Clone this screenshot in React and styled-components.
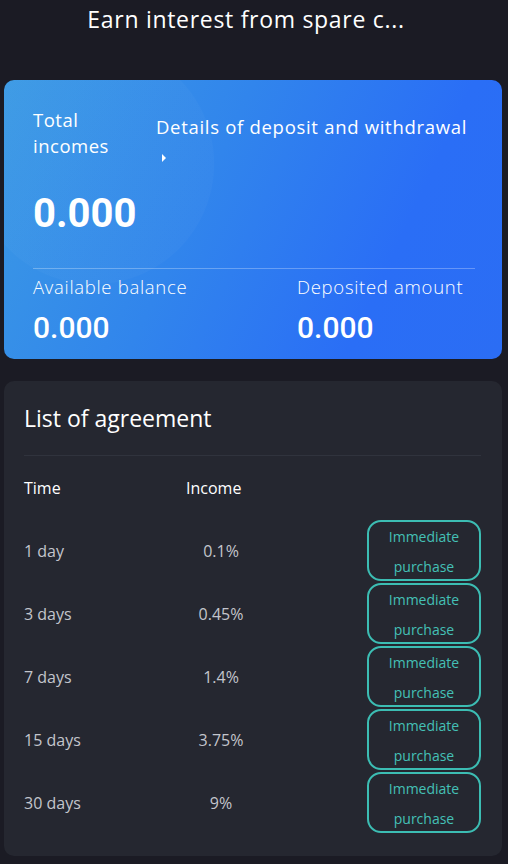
import React from "react";
import styled, { createGlobalStyle } from "styled-components";

const GlobalStyle = createGlobalStyle`
  html, body {
    margin: 0;
    padding: 0;
    background: #1b1b24;
  }
  body {
    font-family: "Open Sans", "Noto Sans", sans-serif;
    color: #fff;
  }
`;

const Page = styled.div`
  width: 508px;
  min-height: 864px;
  background: #1b1b24;
  padding: 0 6px 9px 4px;
  box-sizing: border-box;
  display: flex;
  flex-direction: column;
`;

const Header = styled.div`
  height: 38px;
  display: flex;
  align-items: center;
  justify-content: center;
  padding: 0 14px 0 0;
  font-size: 23px;
  letter-spacing: 0.7px;
  color: #fff;
`;

const BlueCard = styled.div`
  margin-top: 42px;
  height: 279px;
  border-radius: 10px;
  background: radial-gradient(circle at 18% 30%, rgba(255, 255, 255, 0.025) 0, rgba(255, 255, 255, 0.025) 120px, transparent 121px),
    linear-gradient(115deg, #3b9ae4 0%, #3185ec 40%, #2a6ef6 75%, #2b6df4 100%);
  padding: 27px 27px 0 29px;
  box-sizing: border-box;
  display: flex;
  flex-direction: column;
`;

const TopRow = styled.div`
  display: flex;
  gap: 33px;
`;

const TotalLabel = styled.div`
  width: 90px;
  font-size: 18.5px;
  letter-spacing: 0.5px;
  line-height: 26px;
`;

const DetailsLink = styled.div`
  padding-top: 7px;
  font-size: 18.5px;
  letter-spacing: 0.7px;
  line-height: 26px;
  white-space: nowrap;
`;

const Caret = styled.span`
  display: block;
  margin: 14px 0 0 6px;
  width: 0;
  height: 0;
  border-top: 4px solid transparent;
  border-bottom: 4px solid transparent;
  border-left: 4px solid #fff;
`;

const BigValue = styled.div`
  margin-top: 30px;
  font-family: Roboto, sans-serif;
  font-size: 40px;
  font-weight: 700;
  line-height: 44px;
`;

const Divider = styled.div`
  margin-top: 32px;
  height: 1px;
  background: rgba(255, 255, 255, 0.28);
`;

const Stats = styled.div`
  display: grid;
  grid-template-columns: 264px 1fr;
  margin-top: 5px;
`;

const Stat = styled.div`
  display: flex;
  flex-direction: column;
`;

const StatLabel = styled.div`
  font-size: 18.5px;
  letter-spacing: 0.7px;
  line-height: 26px;
  font-weight: 300;
`;

const StatValue = styled.div`
  margin-top: 12px;
  font-family: Roboto, sans-serif;
  font-size: 30px;
  font-weight: 500;
  line-height: 32px;
`;

const ListCard = styled.div`
  margin-top: 22px;
  flex: 1;
  border-radius: 10px;
  background: #252730;
  padding: 22px 21px 22px 20px;
  box-sizing: border-box;
`;

const ListTitle = styled.div`
  font-size: 23px;
  line-height: 30px;
  color: #fff;
`;

const ListDivider = styled.div`
  margin-top: 22px;
  height: 1px;
  background: #30333d;
`;

const TableHead = styled.div`
  display: grid;
  grid-template-columns: 162px 70px 1fr;
  margin-top: 21px;
  font-size: 16px;
  line-height: 22px;
  color: #fff;
  margin-bottom: 20px;
`;

const Row = styled.div`
  display: grid;
  grid-template-columns: 162px 70px 1fr;
  align-items: center;
  height: 63px;
  font-size: 16px;
  color: #c3c5cc;
`;

const IncomeCell = styled.div`
  text-align: center;
`;

const BuyButton = styled.button`
  justify-self: end;
  width: 114px;
  height: 61px;
  border: 2px solid #3cbdb3;
  border-radius: 14px;
  background: transparent;
  color: #44c0b6;
  font-family: "Open Sans", sans-serif;
  font-size: 14px;
  line-height: 30px;
  padding: 0 0 2px;
  cursor: pointer;
`;

const plans = [
  { time: "1 day", income: "0.1%" },
  { time: "3 days", income: "0.45%" },
  { time: "7 days", income: "1.4%" },
  { time: "15 days", income: "3.75%" },
  { time: "30 days", income: "9%" }
];

export default function App() {
  return (
    <>
      <GlobalStyle />
      <Page>
        <Header>Earn interest from spare c...</Header>
        <BlueCard>
          <TopRow>
            <TotalLabel>Total incomes</TotalLabel>
            <DetailsLink>
              Details of deposit and withdrawal
              <Caret />
            </DetailsLink>
          </TopRow>
          <BigValue>0.000</BigValue>
          <Divider />
          <Stats>
            <Stat>
              <StatLabel>Available balance</StatLabel>
              <StatValue>0.000</StatValue>
            </Stat>
            <Stat>
              <StatLabel>Deposited amount</StatLabel>
              <StatValue>0.000</StatValue>
            </Stat>
          </Stats>
        </BlueCard>
        <ListCard>
          <ListTitle>List of agreement</ListTitle>
          <ListDivider />
          <TableHead>
            <div>Time</div>
            <div>Income</div>
          </TableHead>
          {plans.map((p) => (
            <Row key={p.time}>
              <div>{p.time}</div>
              <IncomeCell>{p.income}</IncomeCell>
              <BuyButton>
                Immediate
                <br />
                purchase
              </BuyButton>
            </Row>
          ))}
        </ListCard>
      </Page>
    </>
  );
}
